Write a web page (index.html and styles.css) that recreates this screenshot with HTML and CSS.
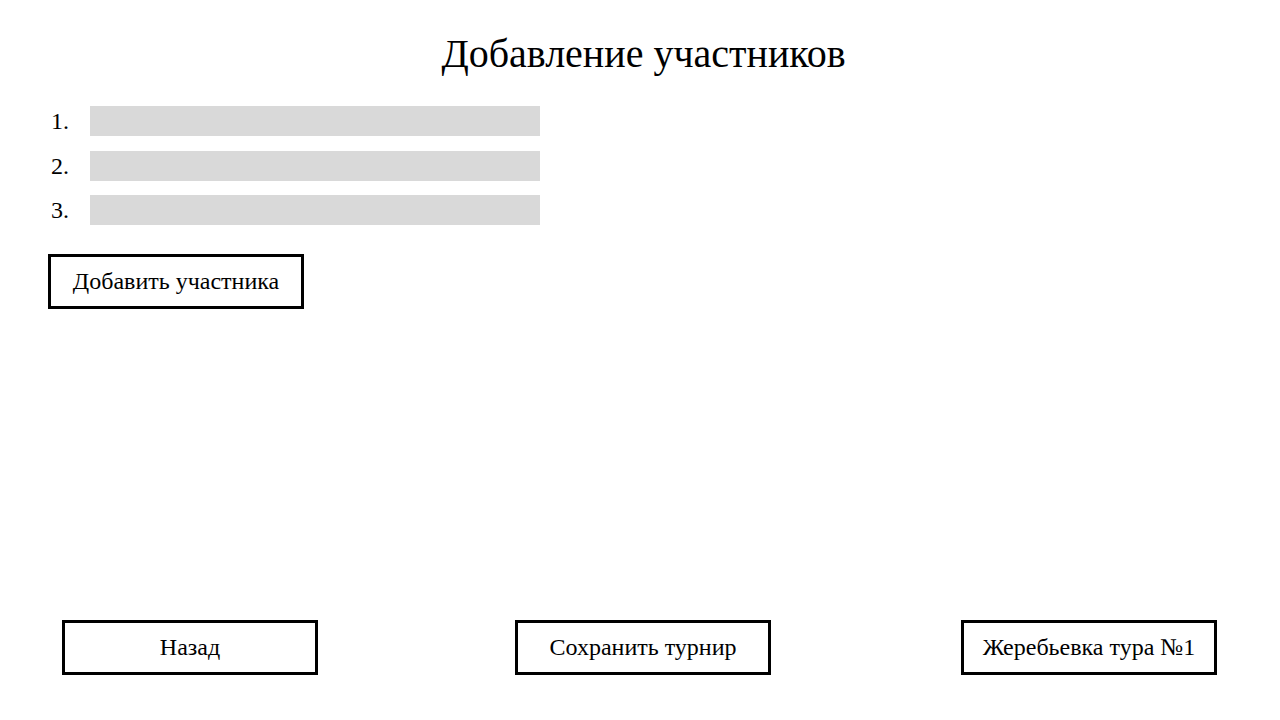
FILE: index.html
```html
<!DOCTYPE html>
<html lang="ru">
<head>
<meta charset="utf-8">
<title>Добавление участников</title>
<link rel="stylesheet" href="styles.css">
</head>
<body>
<div class="page">
  <h1 class="title">Добавление участников</h1>
  <main class="content">
    <ol class="players">
      <li class="player"><span class="num">1.</span><input class="field" type="text"></li>
      <li class="player"><span class="num">2.</span><input class="field" type="text"></li>
      <li class="player"><span class="num">3.</span><input class="field" type="text"></li>
    </ol>
    <button class="btn btn-add" type="button">Добавить участника</button>
  </main>
  <footer class="footer">
    <button class="btn" type="button">Назад</button>
    <button class="btn btn-mid" type="button">Сохранить турнир</button>
    <button class="btn" type="button">Жеребьевка тура №1</button>
  </footer>
</div>
</body>
</html>
```

FILE: styles.css
```css
* { box-sizing: border-box; }
html, body { margin: 0; padding: 0; background: #fff; }
body {
  font-family: "Liberation Serif", "Times New Roman", serif;
  color: #000;
}
.page {
  height: 720px;
  display: flex;
  flex-direction: column;
}
.title {
  margin: 30px 0 0;
  padding-left: 7px;
  font-size: 40px;
  font-weight: normal;
  text-align: center;
  line-height: 48px;
}
.content {
  padding: 0 48px;
}
.players {
  list-style: none;
  margin: 28px 0 0;
  padding: 0;
  display: flex;
  flex-direction: column;
  gap: 14.5px;
}
.player {
  display: flex;
  align-items: center;
  height: 30px;
}
.num {
  width: 42px;
  padding-left: 3px;
  font-size: 24px;
  line-height: 30px;
}
.field {
  width: 450px;
  height: 30px;
  border: none;
  background: #d9d9d9;
  margin: 0;
  padding: 0 8px;
  font: inherit;
}
.btn {
  width: 256px;
  height: 55px;
  border: 3px solid #000;
  background: #fff;
  font-family: inherit;
  font-size: 24px;
  color: #000;
  padding: 0;
  cursor: pointer;
}
.btn-add {
  margin-top: 29px;
}
.btn-mid {
  margin-left: 7px;
}
.footer {
  margin-top: auto;
  padding: 0 63px 45px 62px;
  display: flex;
  justify-content: space-between;
}
```
